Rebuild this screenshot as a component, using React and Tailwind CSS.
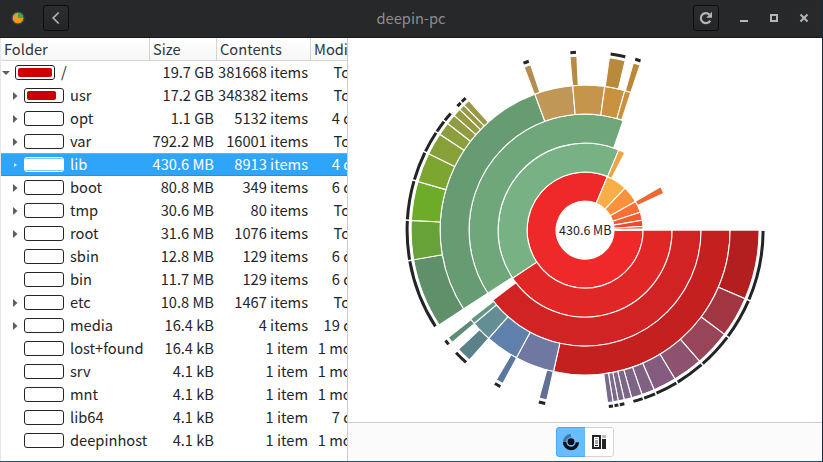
import React from "react";

const FONT = "font-['Noto_Sans_CJK_SC',sans-serif]";

const rows = [
  { name: "/", size: "19.7 GB", items: "381668 items", mod: "Today", open: true, root: true, fill: 34 },
  { name: "usr", size: "17.2 GB", items: "348382 items", mod: "Today", arrow: true, fill: 29 },
  { name: "opt", size: "1.1 GB", items: "5132 items", mod: "4 days", arrow: true },
  { name: "var", size: "792.2 MB", items: "16001 items", mod: "Today", arrow: true },
  { name: "lib", size: "430.6 MB", items: "8913 items", mod: "4 days", arrow: true, selected: true },
  { name: "boot", size: "80.8 MB", items: "349 items", mod: "6 days", arrow: true },
  { name: "tmp", size: "30.6 MB", items: "80 items", mod: "Today", arrow: true },
  { name: "root", size: "31.6 MB", items: "1076 items", mod: "Today", arrow: true },
  { name: "sbin", size: "12.8 MB", items: "129 items", mod: "6 days" },
  { name: "bin", size: "11.7 MB", items: "129 items", mod: "6 days" },
  { name: "etc", size: "10.8 MB", items: "1467 items", mod: "Today", arrow: true },
  { name: "media", size: "16.4 kB", items: "4 items", mod: "19 days", arrow: true },
  { name: "lost+found", size: "16.4 kB", items: "1 item", mod: "1 month" },
  { name: "srv", size: "4.1 kB", items: "1 item", mod: "1 month" },
  { name: "mnt", size: "4.1 kB", items: "1 item", mod: "1 month" },
  { name: "lib64", size: "4.1 kB", items: "1 item", mod: "7 days" },
  { name: "deepinhost", size: "4.1 kB", items: "1 item", mod: "1 month" },
];

// [ring, start angle, end angle, colour]; angles run clockwise from east
const sectors = [
  [1, 0, 292.6, "#ef2929"],
  [1, 292.6, 313.6, "#f9af48"],
  [1, 313.6, 330.5, "#fa923c"],
  [1, 330.5, 342.1, "#f87035"],
  [1, 342.1, 350.2, "#f65a30"],
  [1, 350.2, 356.3, "#f4452d"],
  [1, 356.3, 358.9, "#f2382b"],
  [1, 358.9, 360, "#f0302a"],
  [2, 0, 146.5, "#e12626"],
  [2, 146.5, 292.8, "#78b284"],
  [2, 292.8, 297.2, "#eba544"],
  [2, 330.1, 334.9, "#e96a33"],
  [3, 0, 142.8, "#d12323"],
  [3, 147, 289.2, "#6fa77b"],
  [4, 0, 102.6, "#c42020"],
  [4, 102.6, 118.3, "#6e78a1"],
  [4, 118.3, 131.7, "#6080ac"],
  [4, 131.7, 139.9, "#638e94"],
  [4, 139.9, 142.2, "#659880"],
  [4, 147, 249.7, "#679b72"],
  [4, 249.7, 265.1, "#c09756"],
  [4, 265.1, 277.8, "#c4954a"],
  [4, 277.8, 285.9, "#c8923f"],
  [4, 285.9, 288.4, "#c9913c"],
  [5, 0, 23.2, "#b31e1e"],
  [5, 23.2, 36.8, "#a23640"],
  [5, 36.8, 48.9, "#98455a"],
  [5, 48.9, 58.9, "#8e526f"],
  [5, 58.9, 66.6, "#855c7f"],
  [5, 66.6, 70.9, "#806184"],
  [5, 70.9, 74.5, "#7d6487"],
  [5, 74.5, 77, "#7b6688", true],
  [5, 77, 79, "#7a678a"],
  [5, 79, 80.75, "#79698b"],
  [5, 80.75, 82.6, "#786a8c"],
  [5, 102.7, 105.3, "#646f96"],
  [5, 118.2, 120.7, "#5977a0"],
  [5, 131.7, 136.7, "#5b8289"],
  [5, 139.8, 141.9, "#5e8c77"],
  [5, 147, 170.2, "#609069"],
  [5, 170.2, 183.2, "#66a237"],
  [5, 183.2, 196.2, "#6cac29"],
  [5, 196.2, 206, "#7da631"],
  [5, 206, 213.4, "#86a138"],
  [5, 213.4, 217.8, "#8d9e3e"],
  [5, 217.8, 221.2, "#919c42"],
  [5, 221.2, 223.9, "#949a44", true],
  [5, 223.9, 225.9, "#979946"],
  [5, 225.9, 228.1, "#999847"],
  [5, 249.5, 251.8, "#b38e50"],
  [5, 265, 267.3, "#b68b46"],
  [5, 278, 283.3, "#b9893c"],
  [5, 286.1, 288.4, "#bb8838"],
];

const point = (r, a) => {
  const t = (a * Math.PI) / 180;
  return `${(237.1 + r * Math.cos(t)).toFixed(2)} ${(192.1 + r * Math.sin(t)).toFixed(2)}`;
};

const wedge = (ring, a, b) => {
  const ri = ring * 29;
  const ro = ri + 29;
  const big = b - a > 180 ? 1 : 0;
  return `M${point(ri, a)}L${point(ro, a)}A${ro} ${ro} 0 ${big} 1 ${point(ro, b)}L${point(ri, b)}A${ri} ${ri} 0 ${big} 0 ${point(ri, a)}Z`;
};

function Rings() {
  return (
    <svg width="474" height="384" viewBox="0 0 474 384" className="block">
      {sectors.map(([ring, a, b, fill], i) => (
        <path key={i} d={wedge(ring, a, b)} fill={fill} stroke="#fff" strokeWidth="1.1" />
      ))}
      {sectors
        .filter((s) => s[0] === 5 && !s[4])
        .map(([, a, b], i) => (
          <path
            key={i}
            d={`M${point(178, a + 0.25)}A178 178 0 0 1 ${point(178, b - 0.25)}`}
            fill="none"
            stroke="#222426"
            strokeWidth="3"
          />
        ))}
      <text x="237.3" y="197" textAnchor="middle" fontSize="12.5" fill="#222426">
        430.6 MB
      </text>
    </svg>
  );
}

function Row({ row }) {
  const sel = row.selected;
  return (
    <div
      className={
        "flex h-[23px] shrink-0 items-center " +
        (sel ? "border-t border-b border-t-[#58b5f8] border-b-[#1f93ea] bg-[#2ea5f8] text-white" : "text-[#232629]")
      }
    >
      <div className="flex w-[149px] shrink-0 items-center">
        <div className={"flex shrink-0 " + (row.root ? "w-[14px] pl-px" : "w-[23px] pl-[12px]")}>
          {row.open && (
            <svg width="8" height="6" viewBox="0 0 8 6">
              <path d="M0 1h8L4 5z" fill="#5c5e60" />
            </svg>
          )}
          {row.arrow && (
            <svg width="5" height="8" viewBox="0 0 5 8">
              {sel ? (
                <path d="M1 2l3 2-3 2z" fill="#d9eefd" />
              ) : (
                <path d="M0 0l4.5 4L0 8z" fill="#5c5e60" />
              )}
            </svg>
          )}
        </div>
        <div
          className={
            "flex h-[15px] w-[40px] shrink-0 rounded-[3px] border bg-white " +
            (sel ? "border-white" : "border-[#222426] p-[2px]")
          }
        >
          {sel && <div className="w-full rounded-[2px] border-t border-b border-[#7cc6fa]" />}
          {row.fill && <div className="rounded-[2px] bg-[#cc0000]" style={{ width: row.fill }} />}
        </div>
        <span className="mb-[2px] ml-[6px] whitespace-nowrap">{row.name}</span>
      </div>
      <div className="mb-[2px] w-[64px] shrink-0 whitespace-nowrap text-right">{row.size}</div>
      <div className="mb-[2px] w-[94px] shrink-0 whitespace-nowrap text-right">{row.items}</div>
      <div className="mb-[2px] w-[67px] shrink-0 whitespace-nowrap text-right">{row.mod}</div>
    </div>
  );
}

function HeadButton({ children }) {
  return (
    <button className="flex size-[26px] items-center justify-center rounded-[3px] border border-[#0c0d0e] bg-linear-to-b from-[#2b2d2f] to-[#232527]">
      {children}
    </button>
  );
}

function TitleBar() {
  return (
    <header className="flex h-[38px] shrink-0 items-start border-b border-[#17191a] bg-[#262829] pt-[5px]">
      <div className="flex w-[347px] items-center">
        <svg width="14" height="14" viewBox="0 0 14 14" className="mr-[18px] ml-[11px]">
          <circle cx="7" cy="7" r="6.6" fill="#34495e" />
          <circle cx="7" cy="7" r="5.3" fill="#f39c12" />
          <path d="M7 7V1.7A5.3 5.3 0 0 1 12.3 7z" fill="#27ae60" />
        </svg>
        <HeadButton>
          <svg width="12" height="14" viewBox="0 0 12 14" fill="none" stroke="#b4b5b6" strokeWidth="1.7">
            <path d="M8.7 1.5L3.2 7l5.5 5.5" />
          </svg>
        </HeadButton>
      </div>
      <div className="w-[128px] text-center text-[14.67px] leading-[26px] text-[#8c8d8e]">deepin-pc</div>
      <div className="ml-[218px] flex items-center">
        <HeadButton>
          <svg width="14" height="14" viewBox="0 0 14 14" className="shrink-0" fill="none" stroke="#b4b5b6" strokeWidth="2.2">
            <path d="M11.2 9.6A5 5 0 1 1 10.4 3.6" />
            <path d="M13 0.800v6H7.200z" fill="#b4b5b6" stroke="none" />
          </svg>
        </HeadButton>
        <svg width="70" height="26" viewBox="0 0 70 26" className="ml-[20px]" fill="none" stroke="#b4b5b6">
          <path d="M1 16h8" strokeWidth="2" />
          <rect x="32" y="10" width="6" height="6" strokeWidth="2" />
          <path d="M61.500 9.500l7 7M68.500 9.500l-7 7" strokeWidth="2" />
        </svg>
      </div>
    </header>
  );
}

export default function App() {
  return (
    <div
      className={
        "flex h-[462px] w-[823px] flex-col overflow-hidden border-r border-b border-r-[#14283f] border-b-[#1f5573] bg-white " +
        FONT
      }
    >
      <TitleBar />
      <div className="flex min-h-0 flex-1">
        <section className="flex w-[348px] shrink-0 flex-col overflow-hidden border-r border-l border-r-[#cdcdcd] border-l-[#e6e6e6] text-[14.67px] leading-[23px]">
          <div className="flex h-[23px] w-[400px] shrink-0 border-b border-[#d4d4d4] bg-linear-to-b from-white to-[#f7f7f7] leading-[21px] text-[#323537]">
            <div className="w-[149px] border-r border-[#d4d4d4] pl-[3px]">Folder</div>
            <div className="w-[67px] border-r border-[#d4d4d4] pl-[3px]">Size</div>
            <div className="w-[94px] border-r border-[#d4d4d4] pl-[3px]">Contents</div>
            <div className="pl-[3px]">Modified</div>
          </div>
          <div className="flex w-[400px] flex-1 flex-col">
            {rows.map((row) => (
              <Row key={row.name} row={row} />
            ))}
          </div>
        </section>
        <section className="flex min-w-0 flex-1 flex-col">
          <Rings />
          <footer className="flex flex-1 border-t border-[#cdcdcd] bg-[#fbfbfb] pt-1 pl-[208px]">
            <div className="flex h-[30px] w-[58px] overflow-hidden rounded-[3px]">
              <div className="flex w-[29px] items-center justify-center rounded-l-[3px] border border-r-0 border-[#4ba6fb] bg-[#68bdff]">
                <svg width="18" height="18" viewBox="0 0 18 18" className="shrink-0" fill="none" strokeWidth="3.400">
                  <path d="M2.600 9A6.400 6.400 0 0 1 9 2.600" stroke="#3f7ba8" />
                  <path d="M2.600 9A6.400 6.400 0 1 0 15.400 9.200" stroke="#0b0f13" />
                  <circle cx="9" cy="8.700" r="3.400" fill="#0b0f13" />
                </svg>
              </div>
              <div className="flex flex-1 items-center justify-center rounded-r-[3px] border border-l-0 border-[#d4d4d4] bg-white">
                <svg width="14" height="14" viewBox="0 0 14 14">
                  <path d="M1 1h7v12H1z" fill="#fff" stroke="#222426" strokeWidth="2" />
                  <path d="M3 3h3v1H3zM3 5h3v4H3z" fill="#aaa" />
                  <path d="M3 10h3v1H3z" fill="#222426" />
                  <path d="M10 0h4v3h-4z" fill="#bbb" />
                  <path d="M10 4h4v10h-4z" fill="#222426" />
                </svg>
              </div>
            </div>
          </footer>
        </section>
      </div>
    </div>
  );
}
